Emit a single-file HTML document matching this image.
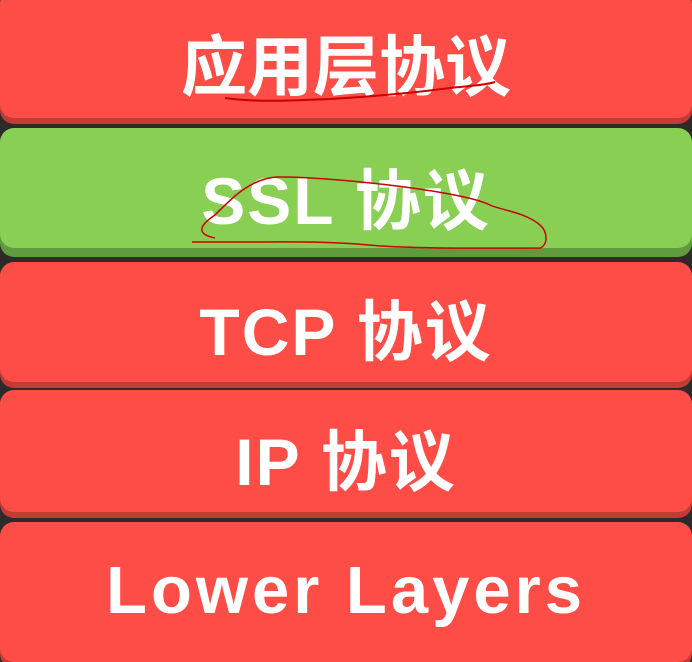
<!DOCTYPE html>
<html><head><meta charset="utf-8"><style>
html,body{margin:0;padding:0;width:692px;height:644px;overflow:hidden;background:#2e2a2a;}
.b{position:absolute;left:0;width:692px;border-radius:14px;color:#fff;text-align:center;
font-family:"Liberation Sans","Noto Sans CJK SC",sans-serif;font-weight:bold;font-size:66px;letter-spacing:2px;}
.r{background:#fe4c46;box-shadow:0 6px 0 #c23c36;}
.g{background:#88cf54;box-shadow:0 9px 0 #5f9a3c;}
.t{position:absolute;left:0;right:0;line-height:1;}
</style></head><body>
<div class="b r" style="top:-10px;height:128px"><div class="t" style="top:44px;font-size:66px;letter-spacing:0">应用层协议</div></div>
<div class="b g" style="top:128px;height:120px"><div class="t" style="top:40px">SSL 协议</div></div>
<div class="b r" style="top:262px;height:120px"><div class="t" style="top:37px">TCP 协议</div></div>
<div class="b r" style="top:390px;height:122px"><div class="t" style="top:39px">IP 协议</div></div>
<div class="b r" style="top:522px;height:140px"><div class="t" style="top:35px;font-size:67px;letter-spacing:4px">Lower Layers</div></div>
<svg style="position:absolute;left:0;top:0" width="692" height="644">
<path d="M225 98 C260 103 300 100 330 99 C380 96 420 92 450 88 C470 86 485 85 495 82" fill="none" stroke="#c00" stroke-width="2"/>
<path d="M192 242 L240 242 C300 242 330 241 380 246 C430 249 490 248 540 248 C548 245 548 232 540 225 C525 212 500 210 490 205 C460 190 320 176 278 177 C250 178 230 200 215 215 C200 225 195 234 215 238" fill="none" stroke="#c00" stroke-width="1.5"/>
</svg>
</body></html>
